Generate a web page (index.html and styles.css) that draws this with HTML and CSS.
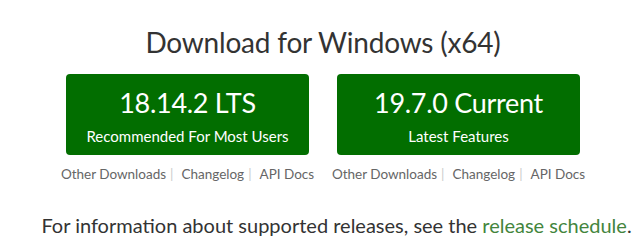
FILE: index.html
```html
<!DOCTYPE html>
<html lang="en">
<head>
    <meta charset="UTF-8">
    <meta name="viewport" content="width=device-width, initial-scale=1.0">
    <title>Download Node.js</title>
    <link rel="stylesheet" href="styles.css">
</head>
<body>
    <main class="download">
        <h1 class="download-title">Download for Windows (x64)</h1>
        <div class="download-options">
            <div class="download-option">
                <a class="download-button" href="#">
                    <span class="download-version">18.14.2 LTS</span>
                    <span class="download-tagline">Recommended For Most Users</span>
                </a>
                <ul class="download-links">
                    <li><a href="#">Other Downloads</a></li>
                    <li><a href="#">Changelog</a></li>
                    <li><a href="#">API Docs</a></li>
                </ul>
            </div>
            <div class="download-option">
                <a class="download-button" href="#">
                    <span class="download-version">19.7.0 Current</span>
                    <span class="download-tagline">Latest Features</span>
                </a>
                <ul class="download-links">
                    <li><a href="#">Other Downloads</a></li>
                    <li><a href="#">Changelog</a></li>
                    <li><a href="#">API Docs</a></li>
                </ul>
            </div>
        </div>
        <p class="download-note">For information about supported releases, see the <a href="#">release schedule</a>.</p>
    </main>
</body>
</html>
```

FILE: styles.css
```css
body {
    font-family: "Lato", "Open Sans", sans-serif;
    margin: 0;
    background: #ffffff;
    color: #333333;
}
.download {
    padding-top: 22px;
}
.download-title {
    margin: 0;
    text-align: center;
    font-size: 28px;
    font-weight: 400;
    letter-spacing: -0.2px;
    line-height: 40px;
    color: #333333;
    padding-left: 3px;
}
.download-options {
    display: flex;
    justify-content: center;
    gap: 28px;
    margin-top: 12px;
    padding-left: 3px;
}
.download-option {
    width: 243px;
}
.download-button {
    display: flex;
    flex-direction: column;
    align-items: center;
    height: 81px;
    box-sizing: border-box;
    padding-top: 13px;
    background: #026e00;
    border-radius: 4px;
    color: #ffffff;
    text-decoration: none;
}
.download-version {
    font-size: 27px;
    letter-spacing: -0.3px;
    line-height: 32px;
}
.download-tagline {
    margin-top: 7px;
    font-size: 15px;
    line-height: 20px;
}
.download-links {
    list-style: none;
    margin: 9px 0 0;
    padding: 0;
    display: flex;
    justify-content: center;
    font-size: 13.5px;
    line-height: 20px;
    white-space: nowrap;
}
.download-links li + li::before {
    content: "|";
    color: #cccccc;
    margin: 0 8px 0 4px;
}
.download-links a {
    color: #666666;
    text-decoration: none;
}
.download-note {
    margin: 29px 0 0;
    padding-left: 30px;
    text-align: center;
    font-size: 20px;
    line-height: 24px;
}
.download-note a {
    color: #43853d;
    text-decoration: none;
}
```
